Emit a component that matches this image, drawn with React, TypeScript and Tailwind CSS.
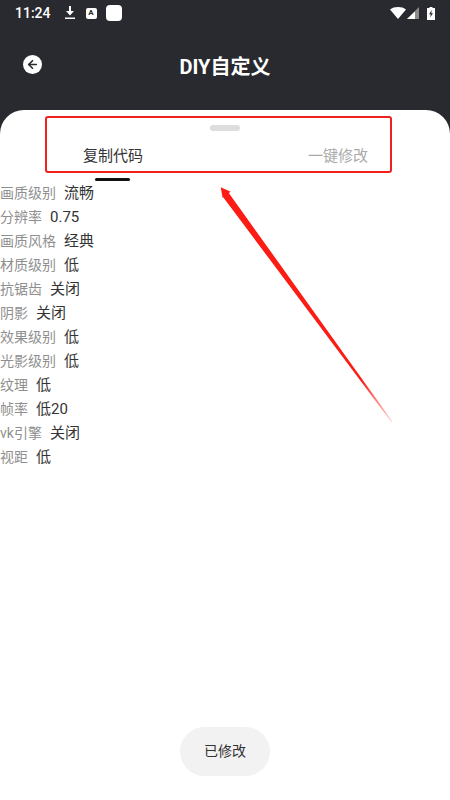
import { ArrowLeft } from "lucide-react";

const rows = [
  ["画质级别", "流畅"],
  ["分辨率", "0.75"],
  ["画质风格", "经典"],
  ["材质级别", "低"],
  ["抗锯齿", "关闭"],
  ["阴影", "关闭"],
  ["效果级别", "低"],
  ["光影级别", "低"],
  ["纹理", "低"],
  ["帧率", "低20"],
  ["vk引擎", "关闭"],
  ["视距", "低"],
];

const font = { fontFamily: 'Roboto, "Noto Sans CJK SC", sans-serif' };

function StatusBar() {
  return (
    <div className="flex h-[26px] items-center pl-[15px] pr-[15px] text-white">
      <span className="text-[14px] font-medium leading-none">11:24</span>
      <svg className="ml-[13px]" width="12" height="14" viewBox="0 0 12 14" fill="white">
        <path d="M5 0h2v5h3L6 9.500 2 5h3z" />
        <rect x="1" y="11.500" width="10" height="1.500" />
      </svg>
      <div className="ml-[10px] flex h-[11px] w-[11px] items-center justify-center rounded-[2px] bg-white text-[8px] font-bold leading-none text-[#292a2f]">
        A
      </div>
      <div className="ml-[9px] h-[16px] w-[16px] rounded-[4px] bg-white" />
      <div className="flex-1" />
      <svg width="16" height="12" viewBox="0 0 16 12" fill="white">
        <path d="M0 2.500C2 .800 5 0 8 0s6 .800 8 2.500L8 12z" />
      </svg>
      <svg className="ml-[1px]" width="12" height="12" viewBox="0 0 12 12">
        <path d="M12 0v12H0z" fill="#8b8b8b" />
        <path d="M8 4.500V12H0z" fill="white" />
      </svg>
      <svg className="ml-[8px]" width="8" height="13" viewBox="0 0 8 13" fill="white">
        <path d="M2.500 0h3v1H8v12H0V1h2.500z" />
        <path d="M4.800 3 2 7.300h1.700L3.200 10.500 6 6.200H4.300z" fill="#292a2f" />
      </svg>
    </div>
  );
}

export default function App() {
  return (
    <div className="relative h-[800px] w-[450px] overflow-hidden bg-[#292a2f]" style={font}>
      <StatusBar />

      {/* Header */}
      <div className="relative flex h-[84px] items-center justify-center pb-[3px]">
        <button className="absolute left-[23px] top-[29px] flex h-[19px] w-[19px] items-center justify-center rounded-full bg-white">
          <ArrowLeft size={13} strokeWidth={3} className="text-[#292a2f]" />
        </button>
        <h1 className="text-[20px] font-bold text-white">DIY自定义</h1>
      </div>

      {/* Sheet */}
      <div className="h-[690px] rounded-t-[24px] bg-white">
        <div className="flex justify-center pt-[15px]">
          <div className="h-[6px] w-[30px] rounded-full bg-[#dddddd]" />
        </div>
        <div className="flex items-center justify-between pl-[83px] pr-[82px] pt-[15px]">
          <span className="text-[15px] leading-[20px] text-[#333333]">复制代码</span>
          <span className="text-[15px] leading-[20px] text-[#aaaaaa]">一键修改</span>
        </div>
        <div className="ml-[95px] mt-[12px] h-[3px] w-[35px] rounded-full bg-[#111111]" />

        <div className="flex flex-col">
          {rows.map(([label, value]) => (
            <div key={label} className="flex h-[24px] items-center gap-[8px]">
              <span className="text-[14px] text-[#8f8f8f]">{label}</span>
              <span className="text-[15px] text-[#333333]">{value}</span>
            </div>
          ))}
        </div>
      </div>

      {/* Toast */}
      <div className="absolute left-[180px] top-[727px] flex h-[49px] w-[90px] items-center justify-center rounded-full bg-[#f2f2f2] text-[14px] text-[#333333]">
        已修改
      </div>

      {/* Annotation box */}
      <div className="absolute left-[45px] top-[116px] h-[57px] w-[347px] rounded-[3px] border-[2.5px] border-[#f0211c]" />

      {/* Annotation arrow */}
      <svg className="absolute left-[210px] top-[178px]" width="185" height="250" viewBox="0 0 185 250">
        <defs>
          <linearGradient id="fade" x1="0" y1="0" x2="1" y2="1">
            <stop offset="0.82" stopColor="#fb1c14" />
            <stop offset="1" stopColor="#fb1c14" stopOpacity="0.15" />
          </linearGradient>
        </defs>
        <path d="M10.700 9.300 L20.700 13.700 L18.800 15 L182.300 243.300 L181.300 244 L13.200 19.200 L12.700 20.300 Z" fill="url(#fade)" />
      </svg>
    </div>
  );
}
